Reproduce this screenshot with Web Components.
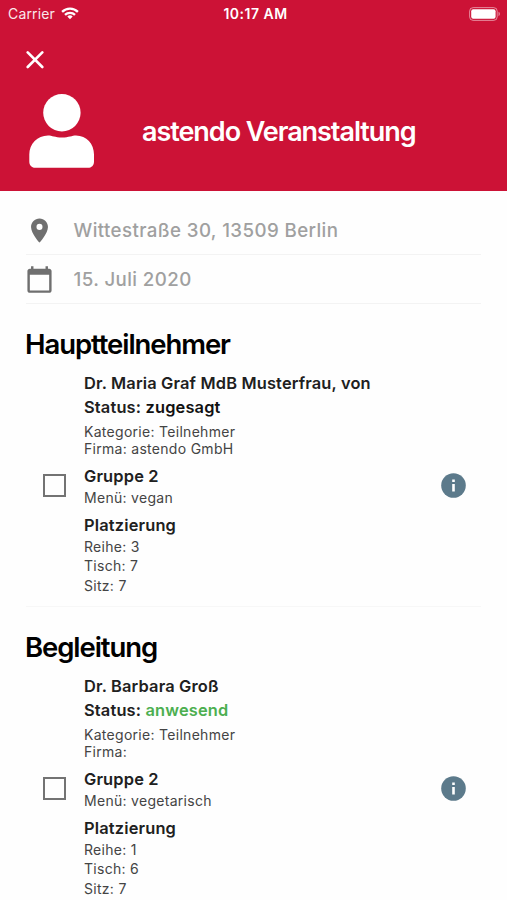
<!DOCTYPE html>
<html lang="de">
<head>
<meta charset="utf-8">
<meta name="viewport" content="width=device-width, initial-scale=1">
<title>astendo Veranstaltung</title>
<style>
  body {
    margin: 0;
    height: 900px;
    overflow: hidden;
    background: #fefefe;
    color: #202020;
    font-family: Inter, "Liberation Sans", sans-serif;
  }
</style>
</head>
<body>
<event-page>
  <status-bar slot="header" carrier="Carrier" time="10:17 AM"></status-bar>
  <event-header slot="header">astendo Veranstaltung</event-header>

  <info-row icon="place">Wittestraße 30, 13509 Berlin</info-row>
  <info-row icon="date">15. Juli 2020</info-row>

  <guest-section heading="Hauptteilnehmer">
    <guest-card name="Dr. Maria Graf MdB Musterfrau, von" status="zugesagt"
      category="Teilnehmer" company="astendo GmbH" group="Gruppe 2" menu="vegan"
      row="3" table="7" seat="7"></guest-card>
  </guest-section>
  <guest-section heading="Begleitung">
    <guest-card name="Dr. Barbara Groß" status="anwesend"
      category="Teilnehmer" company="" group="Gruppe 2" menu="vegetarisch"
      row="1" table="6" seat="7"></guest-card>
  </guest-section>
</event-page>

<script>
class BaseElement extends HTMLElement {

  constructor() {
    super()
    const template = document.createElement('template')
    template.innerHTML = this._generateTemplate()
    this.attachShadow({ mode: 'open' }).appendChild(template.content.cloneNode(true))
  }

  // copies attribute values into the nodes marked with data-attr
  connectedCallback() {
    this.shadowRoot.querySelectorAll('[data-attr]').forEach(($el) => {
      $el.textContent = this.getAttribute($el.dataset.attr) || ''
    })
  }

}

window.customElements.define('event-page', class extends BaseElement {

  _generateTemplate() {
    return `
      <style>
        :host { display: flex; flex-direction: column; }
        header { box-sizing: border-box; height: 191px; background: #cc1236; color: #fff; }
        main { padding: 15px 26px 0; }
      </style>
      <header><slot name="header"></slot></header>
      <main><slot></slot></main>
    `
  }

})

window.customElements.define('status-bar', class extends BaseElement {

  _generateTemplate() {
    return `
      <style>
        :host {
          display: grid; grid-template-columns: 1fr auto 1fr; align-items: center;
          height: 27px; padding: 0 6px 0 8px; font-size: 14px; line-height: 27px;
        }
        .left { display: flex; align-items: center; gap: 6px; }
        .carrier { letter-spacing: 0.15px; opacity: 0.9; }
        .time { font-weight: 600; letter-spacing: 0.5px; padding-left: 2px; }
        .battery { justify-self: end; }
        svg { display: block; }
      </style>
      <div class="left">
        <span class="carrier" data-attr="carrier"></span>
        <svg width="18" height="13" viewBox="0 0 18 13" fill="none" stroke="#fff" stroke-width="2.3">
          <path d="M1.1 4.9a11.2 11.2 0 0 1 15.8 0M4 7.9a7.1 7.1 0 0 1 10 0"/>
          <path d="M9 12.3 6.3 9.6a3.9 3.9 0 0 1 5.4 0z" fill="#fff" stroke="none"/>
        </svg>
      </div>
      <span class="time" data-attr="time"></span>
      <svg class="battery" width="32" height="14" viewBox="0 0 32 14">
        <rect x=".6" y=".6" width="27.6" height="12.8" rx="3.6" fill="none" stroke="#fff" stroke-opacity=".5"/>
        <rect x="2.2" y="2.2" width="24.4" height="9.6" rx="2" fill="#fff"/>
        <path d="M29.5 4.8a2.4 2.4 0 0 1 0 4.4z" fill="#fff" fill-opacity=".5"/>
      </svg>
    `
  }

})

window.customElements.define('event-header', class extends BaseElement {

  _generateTemplate() {
    return `
      <style>
        :host { display: flex; flex-direction: column; padding: 24px 26px 0; }
        .close { display: block; width: 18px; height: 18px; }
        .row { display: flex; align-items: center; margin-top: 24px; height: 76px; }
        .avatar { display: block; margin-left: 2px; }
        h1 {
          margin: 0 0 0 46px; padding-top: 2px; font-size: 27px; line-height: 34px; font-weight: 600;
          letter-spacing: -1.05px; white-space: nowrap;
        }
      </style>
      <svg class="close" viewBox="0 0 18 18" stroke="#fff" stroke-width="2.6" stroke-linecap="round">
        <path d="M1.7 1.4 16.3 16M16.3 1.4 1.7 16"/>
      </svg>
      <div class="row">
        <svg class="avatar" width="68" height="76" viewBox="0 0 68 76" fill="#fff">
          <circle cx="33.9" cy="19.7" r="18.7"/>
          <path d="M20 42.5c4 0 7 2 14 2s10-2 14-2c10.500 0 18 8.500 18 19v7c0 4-2.500 6.300-6 6.300H7.500c-3.500 0-6.200-2.300-6.200-6.300v-7c0-10.500 8.200-19 18.700-19z"/>
        </svg>
        <h1><slot></slot></h1>
      </div>
    `
  }

})

const INFO_ICONS = {
  place: '<path d="M12 2C8.130 2 5 5.130 5 9c0 5.250 7 13 7 13s7-7.750 7-13c0-3.870-3.130-7-7-7zm0 9.500a2.500 2.500 0 0 1 0-5 2.500 2.500 0 0 1 0 5z"/>',
  date: '<path d="M20 3h-1V1h-2v2H7V1H5v2H4c-1.100 0-2 .9-2 2v16c0 1.100.9 2 2 2h16c1.100 0 2-.9 2-2V5c0-1.100-.9-2-2-2zm0 18H4V8h16v13z"/>'
}

window.customElements.define('info-row', class extends BaseElement {

  _generateTemplate() {
    return `
      <style>
        :host {
          display: flex; align-items: center; box-sizing: border-box; height: 49px;
          border-bottom: 1px solid #f3f3f3; color: #a0a0a0;
          font-size: 18.7px; font-weight: 500; letter-spacing: 0.41px;
        }
        svg { display: block; width: 29px; height: 29px; margin: 0 19.5px 0 -1px; fill: #6f6f6f; }
        span { padding-top: 1px; }
      </style>
      <svg viewBox="0 0 24 24">${INFO_ICONS[this.getAttribute('icon')]}</svg>
      <span><slot></slot></span>
    `
  }

})

window.customElements.define('guest-section', class extends BaseElement {

  _generateTemplate() {
    return `
      <style>
        :host { display: block; box-sizing: border-box; height: 303px; padding-top: 22px; border-bottom: 1px solid #f7f7f7; }
        h2 {
          margin: 0 0 0 -1px; font-size: 27.5px; line-height: 36px; font-weight: 600; color: #000;
          letter-spacing: -1.08px;
        }
        slot { display: block; padding-top: 10px; }
      </style>
      <h2 data-attr="heading"></h2>
      <slot></slot>
    `
  }

})

window.customElements.define('guest-card', class extends BaseElement {

  _generateTemplate() {
    return `
      <style>
        :host { display: flex; align-items: center; height: 227px; padding: 0 15px 0 17px; }
        .checkbox { box-sizing: border-box; width: 23px; height: 23px; border: 2px solid #737373; }
        .details { flex: 1; align-self: flex-start; margin-left: 18px; }
        p { margin: 0; font-size: 14px; line-height: 19.5px; letter-spacing: 0.29px; color: #444; white-space: nowrap; }
        .strong { font-size: 16.4px; line-height: 24px; font-weight: 600; letter-spacing: 0.17px; color: #202020; }
        .name { line-height: 23px; }
        .tight { line-height: 17px; }
        .category { margin-top: 3.5px; }
        .group { margin-top: 7px; }
        .seating { margin-top: 5.5px; }
        .state { color: #111; }
        :host([status="anwesend"]) .state { color: #4caf50; }
        .info { display: block; }
      </style>
      <div class="checkbox"></div>
      <div class="details">
        <p class="strong name" data-attr="name"></p>
        <p class="strong">Status: <span class="state" data-attr="status"></span></p>
        <p class="tight category">Kategorie: <span data-attr="category"></span></p>
        <p class="tight">Firma: <span data-attr="company"></span></p>
        <p class="strong group" data-attr="group"></p>
        <p>Menü: <span data-attr="menu"></span></p>
        <p class="strong seating">Platzierung</p>
        <p>Reihe: <span data-attr="row"></span></p>
        <p>Tisch: <span data-attr="table"></span></p>
        <p>Sitz: <span data-attr="seat"></span></p>
      </div>
      <svg class="info" width="25" height="25" viewBox="0 0 25 25">
        <circle cx="12.500" cy="12.500" r="12.300" fill="#5c7a8b"/>
        <path d="M11.200 6.400h2.600v2.500h-2.600zM11.200 11h2.600v7.600h-2.600z" fill="#fff"/>
      </svg>
    `
  }

})
</script>
</body>
</html>
